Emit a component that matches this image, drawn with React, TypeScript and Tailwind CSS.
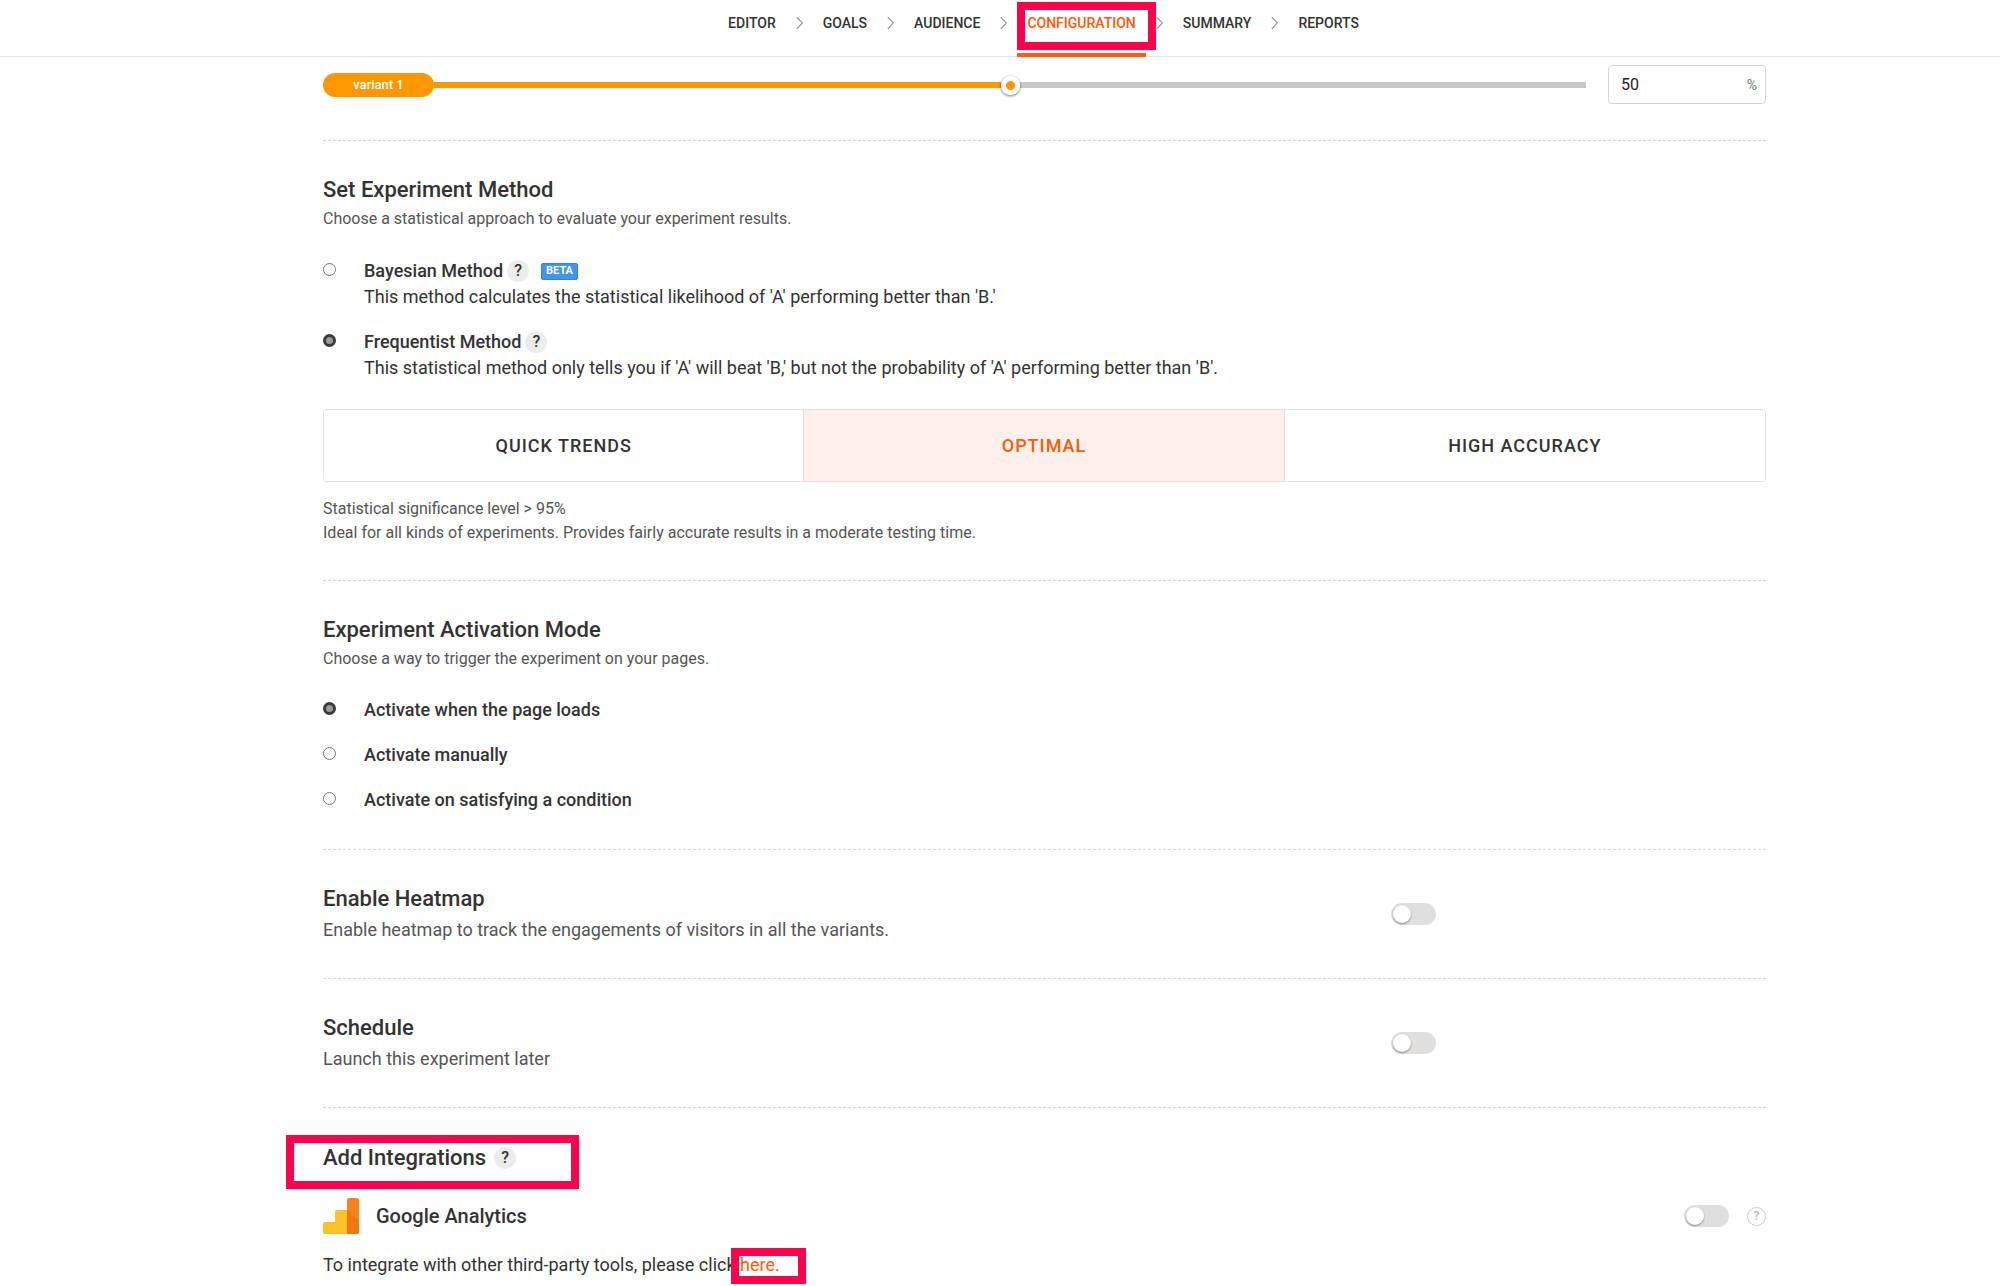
import { useState } from "react";
import type { ReactNode } from "react";
import clsx from "clsx";

const steps = ["Editor", "Goals", "Audience", "Configuration", "Summary", "Reports"];

const accuracyModes = ["Quick Trends", "Optimal", "High Accuracy"];

const activationModes = [
  { id: "load", label: "Activate when the page loads" },
  { id: "manual", label: "Activate manually" },
  { id: "condition", label: "Activate on satisfying a condition" },
];

const radioStyle =
  "m-0 mt-[5px] size-[13px] shrink-0 appearance-none rounded-full border border-[#767676] bg-white checked:border-[3px] checked:border-[#3a3a3a] checked:bg-[#9b9b9b]";

function Chevron() {
  return (
    <svg width="7" height="14" viewBox="0 0 7 14" fill="none" stroke="#8a8a8a" strokeWidth="1.1" aria-hidden="true">
      <path d="M0.8 1.2 L6.2 7 L0.8 12.8" />
    </svg>
  );
}

function Help({ about }: { about: string }) {
  return (
    <button
      type="button"
      aria-label={`Help: ${about}`}
      className="flex size-[22px] shrink-0 items-center justify-center rounded-full bg-[#ececec] text-base font-medium text-[#333]"
    >
      ?
    </button>
  );
}

function Toggle({ label }: { label: string }) {
  const [on, setOn] = useState(false);
  return (
    <input
      type="checkbox"
      role="switch"
      aria-label={label}
      checked={on}
      onChange={() => setOn(!on)}
      className="flex h-[22px] w-[45px] shrink-0 appearance-none items-center rounded-full bg-[#e0dfde] px-0.5 before:size-[18px] before:rounded-full before:bg-white before:shadow-[0_1px_2px_rgba(0,0,0,0.4)] checked:justify-end checked:bg-[#ff5c00]"
    />
  );
}

function Highlight({ className }: { className: string }) {
  return <span aria-hidden="true" className={clsx("pointer-events-none absolute border-8 border-[#ff004d]", className)} />;
}

function Section({ children }: { children: ReactNode }) {
  return <section className="border-b border-dashed border-[#d6d6d6] pt-[35px] pb-[35px]">{children}</section>;
}

function Title({ children }: { children: ReactNode }) {
  return <h2 className="text-[22px] leading-7 font-medium text-[#333]">{children}</h2>;
}

function ToggleSection({ title, text }: { title: string; text: string }) {
  return (
    <section className="flex items-center border-b border-dashed border-[#d6d6d6] pt-[35px] pb-9">
      <div className="w-[74%]">
        <Title>{title}</Title>
        <p className="mt-[5px] text-lg leading-6 text-[#555]">{text}</p>
      </div>
      <Toggle label={title} />
    </section>
  );
}

export default function App() {
  const [traffic, setTraffic] = useState(50);
  const [method, setMethod] = useState("frequentist");
  const [accuracy, setAccuracy] = useState("Optimal");
  const [activation, setActivation] = useState("load");

  return (
    <div className="min-h-screen bg-white font-[Roboto,sans-serif] text-[#333]">
      <header className="h-[57px] border-b border-[#e4e4e4] pl-[87px]">
        <nav className="flex justify-center">
          <ol className="flex">
            {steps.map((step, i) => {
              const active = step === "Configuration";
              return (
                <li key={step} className="flex items-center">
                  {i > 0 && (
                    <span className="mx-2.5 pb-2.5">
                      <Chevron />
                    </span>
                  )}
                  <a
                    href={`#${step.toLowerCase()}`}
                    aria-current={active ? "step" : undefined}
                    className={clsx(
                      "relative flex h-14 items-center px-2.5 pb-2.5 text-sm font-medium uppercase",
                      active && "text-[#ff5c0a] after:absolute after:inset-x-0 after:-bottom-px after:h-1 after:bg-[#ff5c0a]"
                    )}
                  >
                    {step}
                    {active && <Highlight className="top-0.5 -right-2.5 left-0 h-12" />}
                  </a>
                </li>
              );
            })}
          </ol>
        </nav>
      </header>

      <div className="pl-[89px]">
        <main className="mx-auto max-w-[1443px]">
          <div className="flex items-center border-b border-dashed border-[#d6d6d6] pt-2 pb-9">
            <label
              htmlFor="traffic"
              className="flex h-6 w-[111px] items-center justify-center rounded-full bg-[#ff9700] text-[13px] font-medium text-white"
            >
              variant 1
            </label>
            <input
              id="traffic"
              type="range"
              min={0}
              max={100}
              value={traffic}
              onChange={(e) => setTraffic(Number(e.target.value))}
              style={{ backgroundImage: `linear-gradient(to right, #ff9700 ${traffic}%, #c8c8c8 ${traffic}%)` }}
              className="h-1.5 min-w-0 flex-1 appearance-none [&::-webkit-slider-thumb]:size-[19px] [&::-webkit-slider-thumb]:translate-y-px [&::-webkit-slider-thumb]:appearance-none [&::-webkit-slider-thumb]:rounded-full [&::-webkit-slider-thumb]:bg-[radial-gradient(circle,#ff9700_4px,#fff_5px)] [&::-webkit-slider-thumb]:shadow-[0_1px_3px_rgba(0,0,0,0.6)]"
            />
            <label className="ml-[22px] flex h-[39px] w-[158px] items-center rounded-sm border border-[#d4d4d4] px-2 pl-3">
              <input
                type="text"
                aria-label="Traffic share"
                value={traffic}
                onChange={(e) => setTraffic(Number(e.target.value) || 0)}
                className="w-full min-w-0 text-base text-[#222]"
              />
              <span className="text-sm text-[#777]">%</span>
            </label>
          </div>

          <Section>
            <Title>Set Experiment Method</Title>
            <p className="mt-[3px] text-base leading-6 text-[#555]">Choose a statistical approach to evaluate your experiment results.</p>

            <div className="mt-[27px] flex gap-7">
              <input
                id="bayesian"
                type="radio"
                name="method"
                checked={method === "bayesian"}
                onChange={() => setMethod("bayesian")}
                className={radioStyle}
              />
              <div className="text-lg leading-[26px]">
                <div className="flex items-center">
                  <label htmlFor="bayesian" className="mr-1 font-medium">
                    Bayesian Method
                  </label>
                  <Help about="Bayesian Method" />
                  <span className="ml-3 flex h-[17px] items-center rounded-xs border border-[#2f84dd] bg-[#4295ec] px-1 text-[11px] font-bold text-white">
                    BETA
                  </span>
                </div>
                <p>This method calculates the statistical likelihood of 'A' performing better than 'B.'</p>
              </div>
            </div>

            <div className="mt-[19px] flex gap-7">
              <input
                id="frequentist"
                type="radio"
                name="method"
                checked={method === "frequentist"}
                onChange={() => setMethod("frequentist")}
                className={radioStyle}
              />
              <div className="text-lg leading-[26px]">
                <div className="flex items-center">
                  <label htmlFor="frequentist" className="mr-1 font-medium">
                    Frequentist Method
                  </label>
                  <Help about="Frequentist Method" />
                </div>
                <p>This statistical method only tells you if 'A' will beat 'B,' but not the probability of 'A' performing better than 'B'.</p>
              </div>
            </div>

            <div className="mt-7 grid h-[73px] grid-cols-3 divide-x divide-[#e0e0e0] overflow-hidden rounded-sm border border-[#e0e0e0]">
              {accuracyModes.map((mode) => (
                <button
                  key={mode}
                  type="button"
                  aria-pressed={accuracy === mode}
                  onClick={() => setAccuracy(mode)}
                  className={clsx(
                    "text-lg font-medium tracking-[1px] uppercase",
                    accuracy === mode ? "bg-[#fff0ec] text-[#ff5c0a]" : "bg-white"
                  )}
                >
                  {mode}
                </button>
              ))}
            </div>

            <p className="mt-[15px] text-base leading-6 text-[#555]">
              Statistical significance level &gt; 95%
              <br />
              Ideal for all kinds of experiments. Provides fairly accurate results in a moderate testing time.
            </p>
          </Section>

          <Section>
            <Title>Experiment Activation Mode</Title>
            <p className="mt-[3px] text-base leading-6 text-[#555]">Choose a way to trigger the experiment on your pages.</p>
            <div className="mt-[26px] flex flex-col gap-[19px] pb-px">
              {activationModes.map(({ id, label }) => (
                <label key={id} className="flex gap-7 text-lg leading-[26px] font-medium">
                  <input
                    type="radio"
                    name="activation"
                    checked={activation === id}
                    onChange={() => setActivation(id)}
                    className={radioStyle}
                  />
                  {label}
                </label>
              ))}
            </div>
          </Section>

          <ToggleSection title="Enable Heatmap" text="Enable heatmap to track the engagements of visitors in all the variants." />
          <ToggleSection title="Schedule" text="Launch this experiment later" />

          <section className="pt-9">
            <div className="relative flex items-center gap-2">
              <Title>Add Integrations</Title>
              <Help about="Add Integrations" />
              <Highlight className="-top-[9px] -left-[37px] h-[54px] w-[293px]" />
            </div>

            <div className="mt-[26px] flex items-center">
              <svg width="36" height="36" viewBox="0 0 36 36" aria-hidden="true">
                <path d="M12 14a2 2 0 0 1 2-2h10v24H2a2 2 0 0 1-2-2v-8a2 2 0 0 1 2-2h10z" fill="#ffc226" />
                <rect x="24" width="12" height="36" rx="2" fill="#f5821f" />
                <path d="M24 12l12 11v11a2 2 0 0 1-2 2H24z" fill="#ef7613" />
              </svg>
              <h3 className="ml-[17px] flex-1 text-xl font-medium">Google Analytics</h3>
              <Toggle label="Google Analytics" />
              <button
                type="button"
                aria-label="Help: Google Analytics"
                className="ml-[18px] flex size-[19px] items-center justify-center rounded-full border border-[#ccc] text-xs font-medium text-[#bbb]"
              >
                ?
              </button>
            </div>

            <p className="mt-[18px] text-lg leading-[26px]">
              To integrate with other third-party tools, please click{" "}
              <a href="#integrations" className="relative inline-block text-[#ff5c0a]">
                here.
                <Highlight className="-top-1 -right-[26px] -bottom-1.5 -left-[9px]" />
              </a>
            </p>
          </section>
        </main>
      </div>
    </div>
  );
}
